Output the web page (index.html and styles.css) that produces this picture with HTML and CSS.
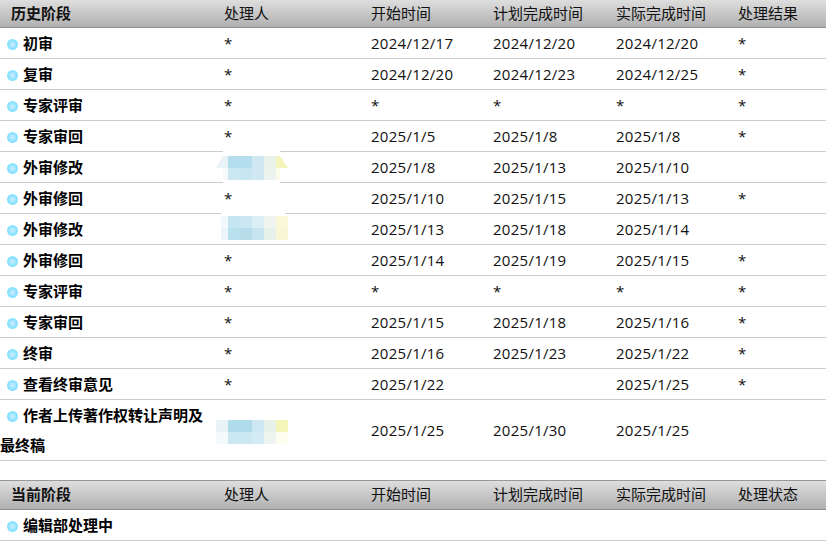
FILE: index.html
```html
<!DOCTYPE html>
<html lang="zh">
<head>
<meta charset="utf-8">
<title>稿件处理历史</title>
<link rel="stylesheet" href="styles.css">
</head>
<body>
<table class="flow">
<colgroup><col class="c1"><col class="c2"><col class="c3"><col class="c4"><col class="c5"><col class="c6"></colgroup>
<thead><tr><th class="stage">历史阶段</th><th>处理人</th><th>开始时间</th><th>计划完成时间</th><th>实际完成时间</th><th>处理结果</th></tr></thead>
<tbody>
<tr><td class="name"><i class="dot"></i>初审</td><td>*</td><td>2024/12/17</td><td>2024/12/20</td><td>2024/12/20</td><td>*</td></tr>
<tr><td class="name"><i class="dot"></i>复审</td><td>*</td><td>2024/12/20</td><td>2024/12/23</td><td>2024/12/25</td><td>*</td></tr>
<tr><td class="name"><i class="dot"></i>专家评审</td><td>*</td><td>*</td><td>*</td><td>*</td><td>*</td></tr>
<tr><td class="name"><i class="dot"></i>专家审回</td><td>*</td><td>2025/1/5</td><td>2025/1/8</td><td>2025/1/8</td><td>*</td></tr>
<tr><td class="name"><i class="dot"></i>外审修改</td><td class="masked"><div class="halo h1"></div><div class="mosaic m1"><b style="background:#e8f3f8"></b><b style="background:#b4dded"></b><b style="background:#b4dded"></b><b style="background:#cfe8f2"></b><b style="background:#e8f1ea"></b><b style="background:#f4f5bc"></b><b style="background:#f6fafc"></b><b style="background:#cbe8f2"></b><b style="background:#c8e6f1"></b><b style="background:#cfe8f2"></b><b style="background:#eaf3ee"></b><b style="background:#fbfbea"></b></div></td><td>2025/1/8</td><td>2025/1/13</td><td>2025/1/10</td><td></td></tr>
<tr><td class="name"><i class="dot"></i>外审修回</td><td>*</td><td>2025/1/10</td><td>2025/1/15</td><td>2025/1/13</td><td>*</td></tr>
<tr><td class="name"><i class="dot"></i>外审修改</td><td class="masked"><div class="halo h2"></div><div class="mosaic m2"><b style="background:#f2f8fb"></b><b style="background:#c4e5f1"></b><b style="background:#cce7f2"></b><b style="background:#dceef5"></b><b style="background:#eff4f0"></b><b style="background:#faf8d9"></b><b style="background:#ecf5f9"></b><b style="background:#b8e0ee"></b><b style="background:#b6dde9"></b><b style="background:#c6e5f1"></b><b style="background:#e6f1ea"></b><b style="background:#f8f6d4"></b></div></td><td>2025/1/13</td><td>2025/1/18</td><td>2025/1/14</td><td></td></tr>
<tr><td class="name"><i class="dot"></i>外审修回</td><td>*</td><td>2025/1/14</td><td>2025/1/19</td><td>2025/1/15</td><td>*</td></tr>
<tr><td class="name"><i class="dot"></i>专家评审</td><td>*</td><td>*</td><td>*</td><td>*</td><td>*</td></tr>
<tr><td class="name"><i class="dot"></i>专家审回</td><td>*</td><td>2025/1/15</td><td>2025/1/18</td><td>2025/1/16</td><td>*</td></tr>
<tr><td class="name"><i class="dot"></i>终审</td><td>*</td><td>2025/1/16</td><td>2025/1/23</td><td>2025/1/22</td><td>*</td></tr>
<tr><td class="name"><i class="dot"></i>查看终审意见</td><td>*</td><td>2025/1/22</td><td></td><td>2025/1/25</td><td>*</td></tr>
<tr><td class="name"><i class="dot"></i>作者上传著作权转让声明及最终稿</td><td class="masked"><div class="mosaic m3"><b style="background:#e8f3f8"></b><b style="background:#b0dbeb"></b><b style="background:#b0dbeb"></b><b style="background:#cde8f2"></b><b style="background:#e6f1ea"></b><b style="background:#f4f5b8"></b><b style="background:#f5fafc"></b><b style="background:#cbe8f2"></b><b style="background:#cbe8f2"></b><b style="background:#d2ebf4"></b><b style="background:#eef5f0"></b><b style="background:#fdfdf0"></b></div></td><td>2025/1/25</td><td>2025/1/30</td><td>2025/1/25</td><td></td></tr>
</tbody>
</table>
<table class="flow current">
<colgroup><col class="c1"><col class="c2"><col class="c3"><col class="c4"><col class="c5"><col class="c6"></colgroup>
<thead><tr><th class="stage">当前阶段</th><th>处理人</th><th>开始时间</th><th>计划完成时间</th><th>实际完成时间</th><th>处理状态</th></tr></thead>
<tbody>
<tr><td class="name"><i class="dot"></i>编辑部处理中</td><td></td><td></td><td></td><td></td><td></td></tr>
</tbody>
</table>
</body>
</html>
```
FILE: styles.css
```css
html, body { margin: 0; padding: 0; background: #fff; overflow: hidden; }
body { font-family: "Open Sans", "Noto Sans CJK SC", sans-serif; font-size: 15px; color: #111; }
.flow { width: 826px; border-collapse: separate; border-spacing: 0; table-layout: fixed; }
.current { margin-top: 19px; }
.c1 { width: 224px; }
.c2 { width: 147px; }
.c3 { width: 122px; }
.c4 { width: 123px; }
.c5 { width: 122px; }
.c6 { width: 88px; }
th { height: 27px; padding: 0; font-weight: normal; text-align: left; line-height: 27px; background: linear-gradient(#dedede, #b0b0b0); border-bottom: 1px solid #8f8f8f; }
th.stage { padding-left: 11px; font-weight: bold; }
.current th { height: 27px; padding-bottom: 1px; border-top: 1px solid #999; }
td { height: 30px; padding: 0; line-height: 30px; letter-spacing: 0.27px; border-bottom: 1px solid #ccc; vertical-align: middle; }
.name { font-weight: bold; color: #000; padding-right: 10px; letter-spacing: 0; }
.dot { display: inline-block; width: 11px; height: 11px; margin: 0 5px 0 7px; border-radius: 50%; background: radial-gradient(circle, #cdeeff 0, #a4e6ff 35%, #7fe0ff 62%, #c4f2ff 88%, #eafbff 100%); vertical-align: -1px; }
.masked { position: relative; }
.halo { position: absolute; background: #fff; top: -1px; bottom: -1px; }
.h1 { left: -1px; width: 57px; }
.h2 { left: -3px; width: 64px; bottom: 0; }
.mosaic { position: absolute; left: -8px; display: grid; grid-template-columns: repeat(6, 12px); grid-auto-rows: 12px; }
.mosaic b { display: block; }
.m1 { top: 4px; clip-path: polygon(7px 0, 64px 0, 72px 12px, 64px 12px, 64px 24px, 7px 24px, 7px 12px, 0 12px); }
.m2 { top: 2px; left: -3px; grid-template-columns: 7px repeat(5, 12px); }
.m3 { top: 20px; }
```
